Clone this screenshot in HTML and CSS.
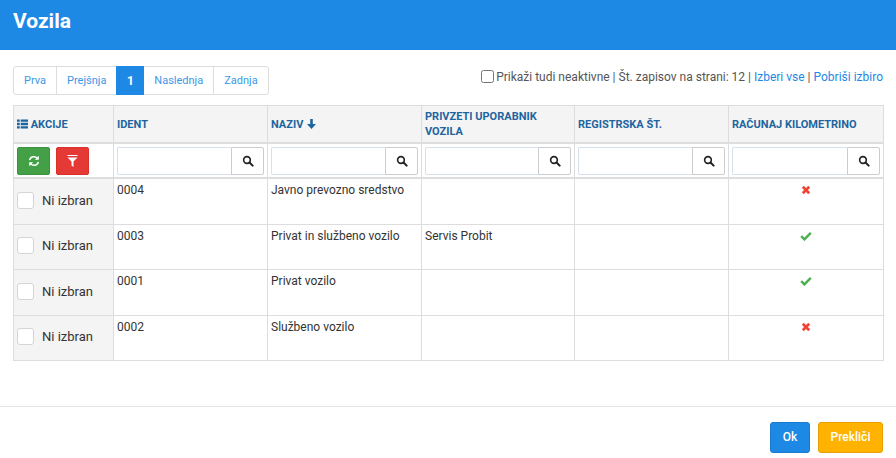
FILE: index.html
```html
<!DOCTYPE html>
<html lang="sl">
<head>
  <meta charset="UTF-8" />
  <title>Vozila</title>
  <link rel="stylesheet" href="styles.css">
</head>
<body>
  <svg class="defs" width="0" height="0">
    <symbol id="i-search" viewBox="0 0 14 14">
      <circle cx="5.8" cy="5.8" r="3.9" fill="none" stroke="currentColor" stroke-width="1.9"/>
      <path d="M8.8 8.8l3.6 3.6" stroke="currentColor" stroke-width="2.4" stroke-linecap="round"/>
    </symbol>
    <symbol id="i-check" viewBox="0 0 12 10">
      <path d="M1.2 5.2l3.2 3.2 6.4-6.6" fill="none" stroke="currentColor" stroke-width="2.4"/>
    </symbol>
    <symbol id="i-cross" viewBox="0 0 10 10">
      <path d="M1.8 1.8l6.4 6.4M8.2 1.8l-6.4 6.4" fill="none" stroke="currentColor" stroke-width="2.7"/>
    </symbol>
  </svg>

  <!-- HEADER -->
  <div class="modal-header">Vozila</div>

  <!-- TOOLBAR -->
  <div class="toolbar">
    <div class="pager">
      <a>Prva</a>
      <a>Prejšnja</a>
      <a class="active">1</a>
      <a>Naslednja</a>
      <a>Zadnja</a>
    </div>
    <div class="options">
      <input type="checkbox" class="inactive-check">
      <span>Prikaži tudi neaktivne | Št. zapisov na strani: 12 | <a>Izberi vse</a> | <a>Pobriši izbiro</a></span>
    </div>
  </div>

  <!-- TABLE -->
  <table class="grid">
    <colgroup>
      <col class="col-actions"><col class="col-data"><col class="col-data"><col class="col-short"><col class="col-data"><col class="col-last">
    </colgroup>
    <thead>
      <tr class="head-row">
        <th class="actions-head">
          <svg class="list-icon" viewBox="0 0 12 10" width="11" height="10"><path fill="currentColor" d="M0 0h3v2.6H0zM4 0h8v2.6H4zM0 3.7h3v2.6H0zM4 3.7h8v2.6H4zM0 7.4h3V10H0zM4 7.4h8V10H4z"/></svg>
          AKCIJE
        </th>
        <th>IDENT</th>
        <th>NAZIV
          <svg class="sort-icon" viewBox="0 0 9 10" width="9" height="10"><path fill="currentColor" d="M3.2 0h2.6v5H9L4.5 10 0 5h3.2z"/></svg>
        </th>
        <th>PRIVZETI UPORABNIK VOZILA</th>
        <th>REGISTRSKA ŠT.</th>
        <th>RAČUNAJ KILOMETRINO</th>
      </tr>
      <tr class="filter-row">
        <td>
          <div class="filter-btns">
            <button class="btn-icon green">
              <svg viewBox="0 0 12 12" width="12" height="12"><path fill="none" stroke="currentColor" stroke-width="1.5" d="M1.6 5.2A4.4 4.4 0 0 1 9.4 3.4M10.4 6.8A4.4 4.4 0 0 1 2.6 8.6"/><path fill="currentColor" d="M10.8.8v4h-4zM1.2 11.2v-4h4z"/></svg>
            </button>
            <button class="btn-icon red">
              <svg viewBox="0 0 10 12" width="11" height="12"><path fill="currentColor" d="M0 0h10v1H0zM0 2.4h10L6 6.4V12L4 10.4V6.4z"/></svg>
            </button>
          </div>
        </td>
        <td><div class="filter"><input type="text"><button><svg width="12" height="12"><use href="#i-search"/></svg></button></div></td>
        <td><div class="filter"><input type="text"><button><svg width="12" height="12"><use href="#i-search"/></svg></button></div></td>
        <td><div class="filter"><input type="text"><button><svg width="12" height="12"><use href="#i-search"/></svg></button></div></td>
        <td><div class="filter"><input type="text"><button><svg width="12" height="12"><use href="#i-search"/></svg></button></div></td>
        <td><div class="filter"><input type="text"><button><svg width="12" height="12"><use href="#i-search"/></svg></button></div></td>
      </tr>
    </thead>
    <tbody>
      <tr class="row-tall">
        <td class="pick"><div class="pick-inner"><span class="box"></span>Ni izbran</div></td>
        <td>0004</td><td>Javno prevozno sredstvo</td><td></td><td></td>
        <td class="flag"><svg class="no" width="10" height="10"><use href="#i-cross"/></svg></td>
      </tr>
      <tr>
        <td class="pick"><div class="pick-inner"><span class="box"></span>Ni izbran</div></td>
        <td>0003</td><td>Privat in službeno vozilo</td><td>Servis Probit</td><td></td>
        <td class="flag"><svg class="yes" width="12" height="10"><use href="#i-check"/></svg></td>
      </tr>
      <tr class="row-tall">
        <td class="pick"><div class="pick-inner"><span class="box"></span>Ni izbran</div></td>
        <td>0001</td><td>Privat vozilo</td><td></td><td></td>
        <td class="flag"><svg class="yes" width="12" height="10"><use href="#i-check"/></svg></td>
      </tr>
      <tr>
        <td class="pick"><div class="pick-inner"><span class="box"></span>Ni izbran</div></td>
        <td>0002</td><td>Službeno vozilo</td><td></td><td></td>
        <td class="flag"><svg class="no" width="10" height="10"><use href="#i-cross"/></svg></td>
      </tr>
    </tbody>
  </table>

  <!-- FOOTER -->
  <div class="modal-footer">
    <button class="btn ok">Ok</button>
    <button class="btn cancel">Prekliči</button>
  </div>
</body>
</html>
```

FILE: styles.css
```css
* { margin: 0; padding: 0; box-sizing: border-box; }
html, body {
  height: 100%;
  font-family: Roboto, sans-serif;
  font-size: 12px;
  background-color: #fff;
  color: #333;
  overflow: hidden;
}

.defs { position: absolute; }

.modal-header {
  height: 50px;
  padding: 9px 13px 0;
  background-color: #1e88e5;
  color: #fff;
  font-size: 21px;
  font-weight: 700;
  line-height: 24px;
}

.toolbar {
  display: flex;
  justify-content: space-between;
  align-items: flex-start;
  height: 55px;
  padding: 16px 13px 0;
}

.pager {
  display: flex;
  height: 29px;
  border: 1px solid #ddd;
  border-radius: 3px;
}

.pager a {
  display: flex;
  align-items: center;
  padding: 0 10px;
  color: #3b97e8;
  font-size: 11px;
  border-left: 1px solid #ddd;
}

.pager a:first-child { border-left: none; }

.pager a.active {
  margin: -1px 0;
  padding: 0 10.5px;
  background-color: #1e88e5;
  border-left: none;
  color: #fff;
  font-weight: 700;
  font-size: 12px;
}

.pager a.active + a { border-left: none; }

.options {
  display: flex;
  align-items: center;
  gap: 2px;
  height: 22px;
  color: #555;
}

.options a { color: #1e88e5; }

.inactive-check {
  width: 13px;
  height: 13px;
  margin-top: -2px;
}

.grid {
  width: 870px;
  margin-left: 13px;
  border-collapse: collapse;
  table-layout: fixed;
  font-size: 12px;
  color: #333;
}

.col-actions { width: 100px; }
.col-data { width: 154px; }
.col-short { width: 153px; }
.col-last { width: 155px; }

.grid th, .grid td {
  border: 1px solid #ddd;
  padding: 4px 3px 3px;
  text-align: left;
  vertical-align: top;
}

.grid th {
  height: 37px;
  padding: 3px;
  vertical-align: middle;
  background-color: #f4f4f4;
  border-bottom-width: 2px;
  color: #1d659f;
  font-size: 11px;
  font-weight: 700;
  line-height: 15px;
}

.grid .actions-head { white-space: nowrap; }

.list-icon { vertical-align: -1px; }
.sort-icon { vertical-align: -1px; margin-left: 1px; }

.filter-row td {
  height: 35px;
  border-bottom-width: 2px;
  vertical-align: top;
  padding: 3px 3px 0;
}

.filter-btns {
  display: flex;
  gap: 6px;
}

.btn-icon {
  display: flex;
  align-items: center;
  justify-content: center;
  width: 33px;
  height: 28px;
  border-radius: 2px;
  color: #fff;
}

.btn-icon.green { background-color: #43a047; border: 1px solid #3d9141; }
.btn-icon.red { background-color: #e53935; border: 1px solid #d9302c; }

.filter {
  display: flex;
  height: 28px;
}

.filter input {
  flex: 1;
  min-width: 0;
  border: 1px solid #d5e0ec;
  border-right: none;
  border-radius: 2px 0 0 2px;
  background: #fff;
}

.filter button {
  display: flex;
  align-items: center;
  justify-content: center;
  width: 33px;
  background: #fff;
  border: 1px solid #ccc;
  border-radius: 0 2px 2px 0;
  color: #222;
}

tbody tr { height: 45px; }
tbody tr.row-tall { height: 46px; }

.grid td.pick {
  padding: 2px 3px 4px;
  background-color: #f4f4f4;
  vertical-align: middle;
}

.pick-inner {
  display: flex;
  align-items: center;
  gap: 8px;
  font-size: 13px;
  color: #333;
}

.box {
  width: 17px;
  height: 17px;
  background: #fff;
  border: 1px solid #d5d5d5;
  border-radius: 3px;
}

.grid td.flag {
  text-align: center;
  padding-top: 5px;
}

.yes { color: #4caf50; }
.no { color: #f44336; }

.modal-footer {
  display: flex;
  justify-content: flex-end;
  gap: 8px;
  margin-top: 45px;
  padding: 15px 13px 0;
  border-top: 1px solid #e5e5e5;
}

.btn {
  height: 31px;
  border-radius: 3px;
  color: #fff;
  font-family: Roboto, sans-serif;
  font-size: 12px;
  font-weight: 500;
}

.btn.ok {
  width: 40px;
  background-color: #1e88e5;
  border: 1px solid #1a7acf;
}

.btn.cancel {
  width: 65px;
  background-color: #ffb300;
  border: 1px solid #e6a100;
}
```
